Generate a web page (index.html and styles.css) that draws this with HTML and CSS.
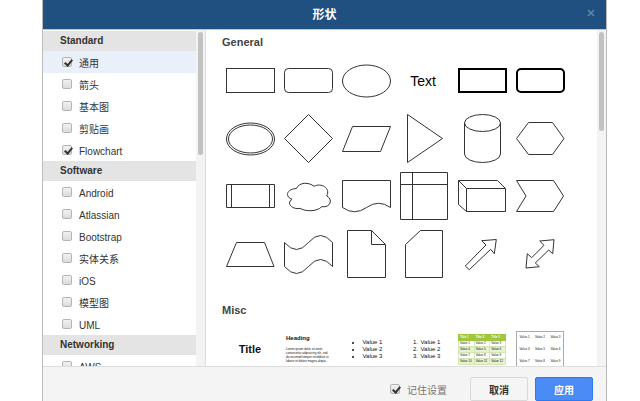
FILE: index.html
```html
<!DOCTYPE html>
<html lang="zh-CN">
<head>
<meta charset="utf-8">
<meta name="viewport" content="width=device-width, initial-scale=1">
<title>形状</title>
<link rel="stylesheet" href="styles.css">
</head>
<body>
<section class="dialog" role="dialog" aria-labelledby="dialog-title">
  <header class="dialog-header">
    <h1 id="dialog-title">形状</h1>
    <button class="close" type="button" aria-label="关闭"><svg viewBox="0 0 8 8"><path d="M1 1L7 7M7 1L1 7"/></svg></button>
  </header>
  <div class="dialog-body">
    <aside class="sidebar">
      <div class="library-list">
        <h2>Standard</h2>
        <label class="library selected"><input type="checkbox" checked><span>通用</span></label>
        <label class="library"><input type="checkbox"><span>箭头</span></label>
        <label class="library"><input type="checkbox"><span>基本图</span></label>
        <label class="library"><input type="checkbox"><span>剪贴画</span></label>
        <label class="library"><input type="checkbox" checked><span>Flowchart</span></label>
        <h2>Software</h2>
        <label class="library"><input type="checkbox"><span>Android</span></label>
        <label class="library"><input type="checkbox"><span>Atlassian</span></label>
        <label class="library"><input type="checkbox"><span>Bootstrap</span></label>
        <label class="library"><input type="checkbox"><span>实体关系</span></label>
        <label class="library"><input type="checkbox"><span>iOS</span></label>
        <label class="library"><input type="checkbox"><span>模型图</span></label>
        <label class="library"><input type="checkbox"><span>UML</span></label>
        <h2>Networking</h2>
        <label class="library"><input type="checkbox"><span>AWS</span></label>
      </div>
      <div class="scrollbar"><div class="thumb thumb-sidebar"></div></div>
    </aside>
    <main class="preview">
      <div class="preview-content">
        <h2>General</h2>
        <div class="shapes">
          <svg viewBox="0 0 58 58"><rect x="4.5" y="16.5" width="48" height="24"/></svg>
          <svg viewBox="0 0 58 58"><rect x="4.5" y="16.5" width="48" height="24" rx="4"/></svg>
          <svg viewBox="0 0 58 58"><ellipse cx="28.5" cy="29" rx="24" ry="16"/></svg>
          <div class="cell text-shape">Text</div>
          <svg viewBox="0 0 58 58" class="thick"><rect x="5" y="17" width="47" height="23"/></svg>
          <svg viewBox="0 0 58 58" class="thick"><rect x="5" y="17" width="47" height="23" rx="4"/></svg>

          <svg viewBox="0 0 58 58"><ellipse cx="28.5" cy="29" rx="24" ry="16"/><ellipse cx="28.5" cy="29" rx="22" ry="14"/></svg>
          <svg viewBox="0 0 58 58"><path d="M28.5 4.5L52.5 28.5L28.5 52.5L4.5 28.5Z"/></svg>
          <svg viewBox="0 0 58 58"><path d="M14.5 16.5H52.5L42.5 41.5H4.5Z"/></svg>
          <svg viewBox="0 0 58 58"><path d="M11.5 4.5L46.5 28.5L11.5 52.5Z"/></svg>
          <svg viewBox="0 0 58 58"><ellipse cx="28.5" cy="13" rx="18" ry="8.5"/><path d="M10.5 13V44A18 8.5 0 0 0 46.5 44V13"/></svg>
          <svg viewBox="0 0 58 58"><path d="M16.5 12.5H40.5L52 28.5L40.5 44.5H16.5L4.5 28.5Z"/></svg>

          <svg viewBox="0 0 58 58"><path d="M4.5 16.5H52.5V39.5H4.5ZM9.5 16.5V39.5M47.5 16.5V39.5"/></svg>
          <svg viewBox="0 0 58 58"><path d="M16.5 20.5C19 14 29 14 34 18.3C41 14.5 51 20 46.7 28C53 31 51 40 41.7 38.7C37 44 25 43.5 20 40.3C12 42 6 35 12 31.3C5 29 6 21 16.5 20.5Z"/></svg>
          <svg viewBox="0 0 58 58"><path d="M4.5 12.5H52.5V39.5Q40.5 31 28.5 39.5T4.5 39.5Z"/></svg>
          <svg viewBox="0 0 58 58"><path d="M4.5 4.5H51.5V51.5H4.5ZM16.5 4.5V51.5M4.5 16.5H51.5"/></svg>
          <svg viewBox="0 0 58 58"><path d="M4.5 12.5H43.5L51.5 20.5V43.5H12.5L4.5 36.5ZM4.5 12.5L12.5 20.5V43.5M12.5 20.5H51.5"/></svg>
          <svg viewBox="0 0 58 58"><path d="M4.5 12.5H41.5L51.5 28L41.5 43.5H4.5L14 28Z"/></svg>

          <svg viewBox="0 0 58 58"><path d="M14.5 16.5H42.5L52 40.5H4.5Z"/></svg>
          <svg viewBox="0 0 58 58"><path d="M4.5 16.5Q16.5 30.5 28.5 16.5T52.5 16.5V40.5Q40.5 26.5 28.5 40.5T4.5 40.5Z"/></svg>
          <svg viewBox="0 0 58 58"><path d="M9.5 4.5H33.5L47.5 18.5V51.5H9.5ZM33.5 4.5V18.5H47.5"/></svg>
          <svg viewBox="0 0 58 58"><path d="M24.5 4.5H46.5V51.5H9.5V18.5Z"/></svg>
          <svg viewBox="0 0 58 58"><path d="M11.3 40L15.3 43.7L36.7 23.3L40.3 27.7L42.3 13.5L27.7 14.7L32 19Z"/></svg>
          <svg viewBox="0 0 58 58"><path d="M14 42L27.3 40.7L23.3 37L36.7 24L40.7 27.7L42 13.7L27.7 15L32 19.3L19.7 31.7L15.3 27.7Z"/></svg>
        </div>
        <h2>Misc</h2>
        <div class="shapes">
          <div class="cell title-shape">Title</div>
          <div class="cell note-shape"><h3>Heading</h3><p>Lorem ipsum dolor sit amet,<br>consectetur adipisicing elit, sed<br>do eiusmod tempor incididunt ut<br>labore et dolore magna aliqua.</p></div>
          <div class="cell list-shape"><ul><li>Value 1</li><li>Value 2</li><li>Value 3</li></ul></div>
          <div class="cell list-shape"><ol><li>Value 1</li><li>Value 2</li><li>Value 3</li></ol></div>
          <div class="cell">
            <table class="mini green">
              <thead><tr><th>Title 1</th><th>Title 2</th><th>Title 3</th></tr></thead>
              <tbody>
                <tr><td>Value 1</td><td>Value 2</td><td>Value 3</td></tr>
                <tr><td>Value 4</td><td>Value 5</td><td>Value 6</td></tr>
                <tr><td>Value 7</td><td>Value 8</td><td>Value 9</td></tr>
                <tr><td>Value 10</td><td>Value 11</td><td>Value 12</td></tr>
              </tbody>
            </table>
          </div>
          <div class="cell">
            <table class="mini outlined">
              <tbody>
                <tr><td>Value 1</td><td>Value 2</td><td>Value 3</td></tr>
                <tr><td>Value 4</td><td>Value 5</td><td>Value 6</td></tr>
                <tr><td>Value 7</td><td>Value 8</td><td>Value 9</td></tr>
              </tbody>
            </table>
          </div>
        </div>
      </div>
      <div class="scrollbar"><div class="thumb thumb-preview"></div></div>
    </main>
  </div>
  <footer class="dialog-footer">
    <label class="remember"><input type="checkbox" checked><span>记住设置</span></label>
    <button class="button" type="button">取消</button>
    <button class="button primary" type="button">应用</button>
  </footer>
</section>
</body>
</html>
```

FILE: styles.css
```css
* {
  box-sizing: border-box;
}

body {
  margin: 0;
  height: 100vh;
  overflow: hidden;
  background: #fff;
  color: #333;
  font-family: "Liberation Sans", "Noto Sans CJK SC", sans-serif;
  font-size: 10px;
}

h1, h2, h3, p, ul, ol {
  margin: 0;
  padding: 0;
}

.dialog {
  display: flex;
  flex-direction: column;
  height: 100%;
  margin: 0 33px 0 42px;
  border: solid #bbb;
  border-width: 0 1px;
}

.dialog-header {
  display: grid;
  grid-template-columns: 1fr auto 1fr;
  flex: none;
  height: 30px;
  padding: 0 10px;
  background: #20507f;
  border-bottom: 1px solid #b8c8dc;
}

.dialog-header h1 {
  grid-column: 2;
  align-self: center;
  color: #fff;
  font-size: 12px;
  line-height: 28px;
}

.close {
  justify-self: end;
  width: 10px;
  height: 25px;
  padding: 0;
  border: 0;
  background: none;
}

.close svg {
  display: block;
  width: 8px;
  height: 8px;
  margin: auto;
  stroke: #6486a8;
  stroke-width: 1.5;
}

.dialog-body {
  display: flex;
  flex: 1;
  min-height: 0;
}

.sidebar {
  display: flex;
  flex: none;
  width: 163px;
  border-right: 1px solid #ddd;
}

.library-list {
  flex: 1;
  padding-top: 1px;
  overflow: hidden;
}

.library-list h2 {
  padding-left: 17px;
  background: #e4e4e4;
  font-size: 10px;
  line-height: 20px;
}

.library {
  display: flex;
  align-items: center;
  gap: 7px;
  height: 22px;
  padding-left: 19px;
  line-height: 18px;
}

.library span {
  padding-top: 4px;
}

.library.selected {
  background: #e9f0fa;
}

input[type="checkbox"] {
  position: relative;
  flex: none;
  appearance: none;
  width: 10px;
  height: 10px;
  margin: 0;
  border: 1px solid #b4b4b4;
  border-radius: 2px;
  background: linear-gradient(#f2f2f2, #dcdcdc);
}

input[type="checkbox"]:checked::before {
  content: "";
  position: absolute;
  top: 0;
  left: 3px;
  width: 3px;
  height: 6px;
  border: solid #333;
  border-width: 0 2px 2px 0;
  transform: rotate(40deg);
}

.scrollbar {
  flex: none;
  width: 9px;
  padding: 2px;
  background: #f3f3f3;
}

.thumb {
  border-radius: 3px;
  background: #c2c2c2;
}

.thumb-sidebar {
  height: 123px;
}

.thumb-preview {
  height: 99px;
}

.preview {
  display: flex;
  flex: 1;
  min-width: 0;
}

.preview-content {
  flex: 1;
  padding: 2px 0 0 16px;
  overflow: hidden;
}

.preview-content h2 {
  color: #444;
  font-size: 11px;
  line-height: 20px;
}

.shapes {
  display: grid;
  grid-template-columns: repeat(6, 58px);
  grid-auto-rows: 58px;
}

.shapes + h2 {
  margin-top: 16px;
}

.shapes svg {
  display: block;
  width: 58px;
  height: 58px;
  fill: none;
  stroke: #333;
  stroke-width: 1;
}

.shapes .thick {
  stroke: #000;
  stroke-width: 2;
}

.cell {
  display: flex;
  align-items: center;
  justify-content: center;
  padding-right: 2px;
  color: #111;
}

.text-shape {
  padding-right: 4px;
  color: #000;
  font-size: 14px;
}

.title-shape {
  font-size: 11px;
  font-weight: bold;
}

.note-shape {
  flex-direction: column;
  align-items: flex-start;
  padding-left: 6px;
  gap: 5px;
  white-space: nowrap;
}

.note-shape h3 {
  font-size: 6px;
  line-height: 7px;
}

.note-shape p {
  font-size: 3px;
  line-height: 4px;
}

.list-shape {
  font-size: 6px;
  line-height: 7px;
}

.list-shape ul,
.list-shape ol {
  padding-left: 12px;
}

.list-shape li {
  padding-left: 1px;
}

.mini {
  width: 48px;
  border-collapse: collapse;
  table-layout: fixed;
  font-size: 3px;
  line-height: 4px;
}

.mini th,
.mini td {
  padding: 0 1px;
  white-space: nowrap;
}

.green th,
.green td {
  height: 6px;
  border: 1px solid #d5e6b5;
  text-align: left;
}

.green th {
  background: #a0c63e;
  border-color: #a0c63e;
  color: #fff;
}

.green tr:nth-child(even) td {
  background: #e6f2cf;
}

.outlined {
  border: 1px solid #aaa;
}

.outlined td {
  height: 12px;
  text-align: center;
}

.dialog-footer {
  display: flex;
  align-items: center;
  justify-content: flex-end;
  flex: none;
  gap: 7px;
  height: 35px;
  padding: 10px 13px 0 0;
  background: #f4f4f4;
  border-top: 1px solid #ddd;
}

.remember {
  display: flex;
  align-items: center;
  gap: 7px;
  margin-right: 16px;
  color: #777;
}

.button {
  width: 58px;
  height: 24px;
  padding: 0;
  border: 1px solid #d8d8d8;
  border-radius: 2px;
  background: #f5f5f5;
  color: #333;
  font: bold 10px "Liberation Sans", "Noto Sans CJK SC", sans-serif;
}

.button.primary {
  border-color: #3079ed;
  background: #4a8bf5;
  color: #fff;
}
```
